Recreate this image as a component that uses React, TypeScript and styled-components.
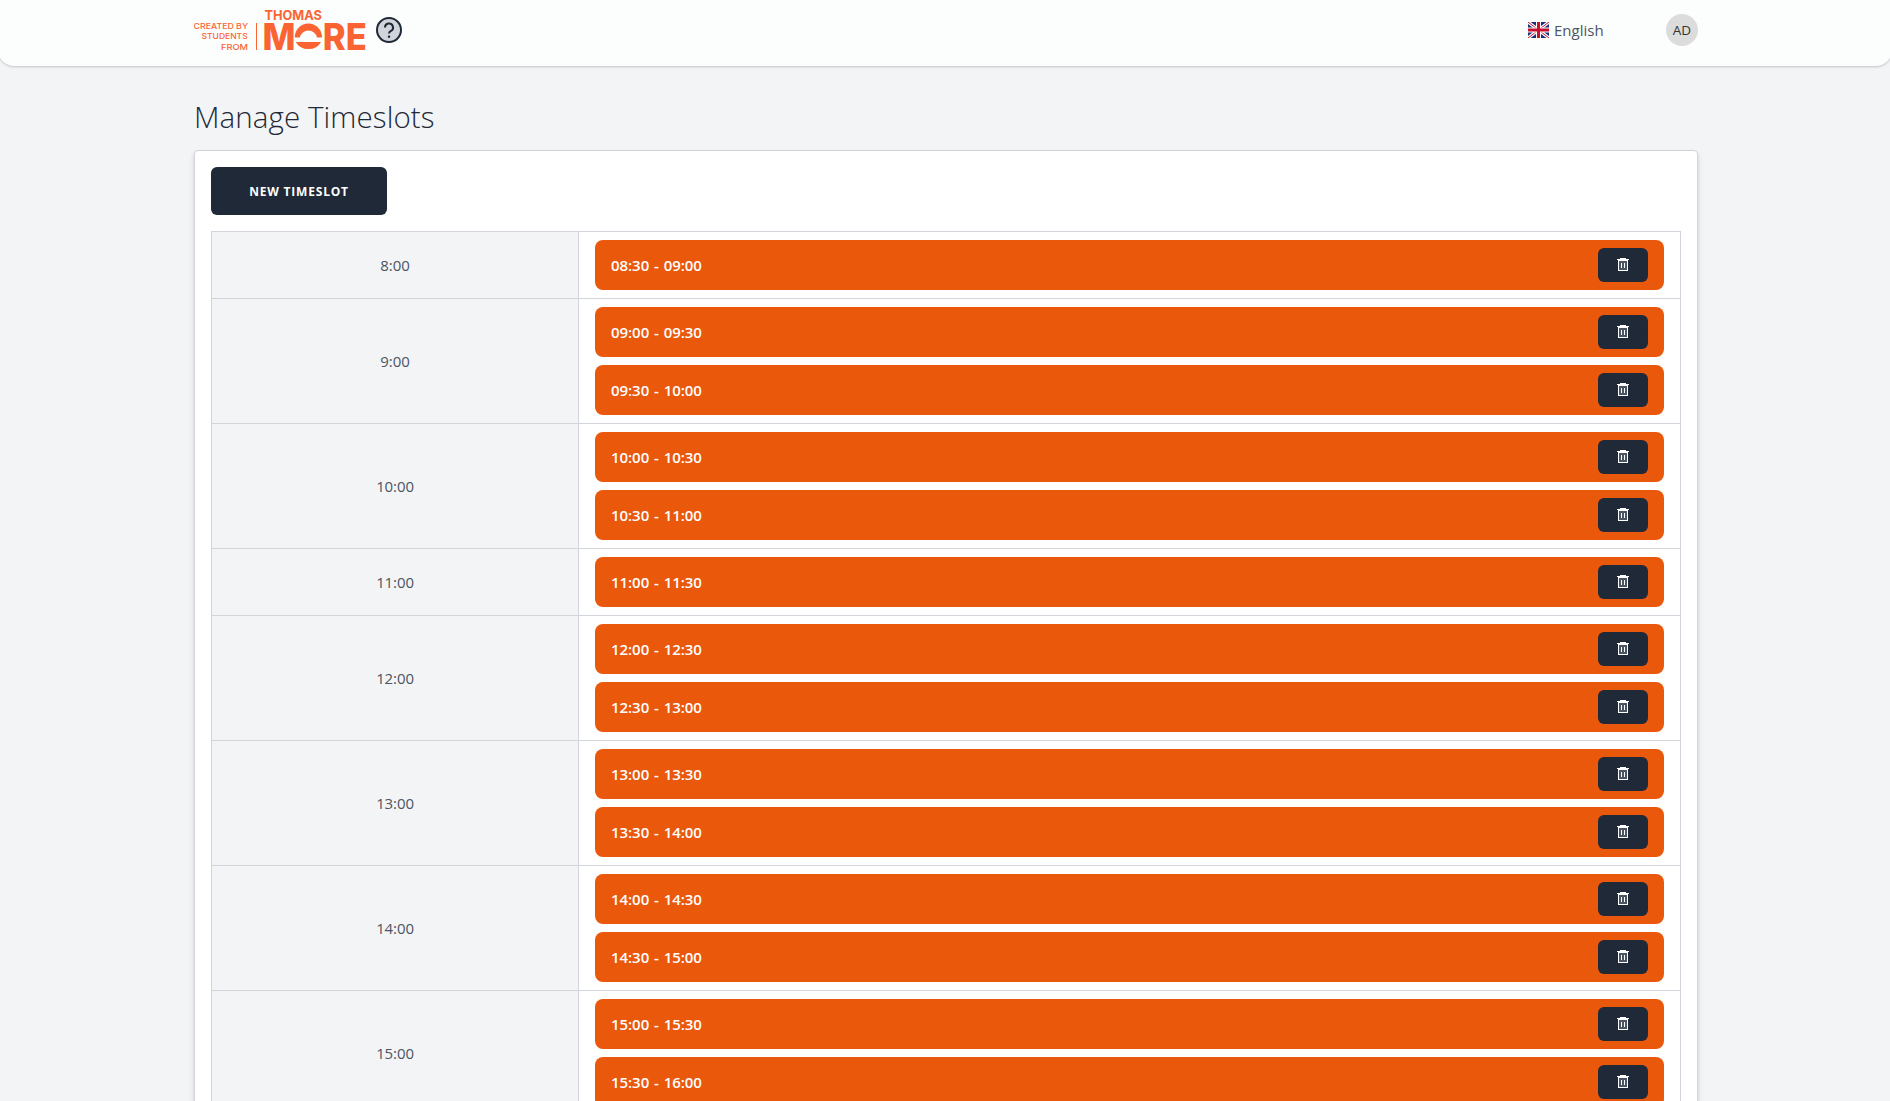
import React from 'react';
import styled, { createGlobalStyle } from 'styled-components';

const Global = createGlobalStyle`
  *, *::before, *::after { box-sizing: border-box; }
  html, body { margin: 0; height: 1101px; overflow: hidden; }
  body { background: #f3f4f6; color: #1f2937; font-family: "Open Sans", "Noto Sans", sans-serif; font-size: 15px; line-height: 24px; }
`;
const Page = styled.div`
  height: 1101px;
  overflow: hidden;
`;
const Nav = styled.header`
  display: flex;
  justify-content: space-between;
  height: 66px;
  margin: 0 -2px;
  padding: 0 194px 0 196px;
  background: #fcfefd;
  border-radius: 0 0 16px 16px;
  box-shadow: 0 1px 3px rgba(0, 0, 0, 0.1), 0 1px 2px rgba(0, 0, 0, 0.1);
`;
const Brand = styled.div`
  display: flex;
  gap: 6px;
`;
const Help = styled.svg`
  margin-top: 17px;
`;
const Tools = styled.div`
  display: flex;
  height: 60px;
  align-items: center;
`;
const Language = styled.div`
  display: flex;
  align-items: center;
  gap: 5px;
  width: 138px;
  color: #4b5563;
`;
const Avatar = styled.div`
  display: grid;
  place-items: center;
  width: 32px;
  height: 32px;
  border-radius: 50%;
  background: #dcdcdc;
  color: #333;
  font-size: 13.5px;
`;
const Main = styled.main`
  width: 1504px;
  margin-left: 194px;
  padding-top: 33px;
`;
const Title = styled.h1`
  margin: 0 0 15px;
  font-size: 29.5px;
  line-height: 36px;
  font-weight: 330;
  letter-spacing: 0.1px;
`;
const Card = styled.section`
  height: 1200px;
  padding: 16px;
  background: #fff;
  border: 1px solid #d1d5db;
  border-radius: 4px;
  box-shadow: 0 4px 6px rgba(0, 0, 0, 0.1), 0 2px 4px rgba(0, 0, 0, 0.06);
`;
const NewButton = styled.button`
  display: block;
  width: 176px;
  height: 48px;
  margin-bottom: 16px;
  padding: 0;
  border: 0;
  border-radius: 6px;
  background: #1f2937;
  color: #fff;
  font: 700 12px "Open Sans", "Noto Sans", sans-serif;
  letter-spacing: 0.8px;
`;
const Table = styled.div`
  border: 1px solid #d1d5db;
  border-bottom: 0;
`;
const Row = styled.div`
  display: grid;
  grid-template-columns: 367px 1fr;
  border-bottom: 1px solid #d1d5db;
`;
const Hour = styled.div`
  display: grid;
  place-items: center;
  background: #f3f4f6;
  border-right: 1px solid #d1d5db;
  color: #4b5563;
  letter-spacing: -0.1px;
`;
const Slots = styled.div`
  display: flex;
  flex-direction: column;
  gap: 8px;
  padding: 8px 16px;
`;
const Slot = styled.div`
  display: flex;
  align-items: center;
  justify-content: space-between;
  height: 50px;
  padding: 0 16px;
  border-radius: 8px;
  background: #ea580c;
  color: #fff;
  font-weight: 550;
  letter-spacing: -0.05px;
  word-spacing: 1px;
`;
const DeleteButton = styled.button`
  display: grid;
  place-items: center;
  width: 50px;
  height: 34px;
  padding: 0;
  border: 0;
  border-radius: 6px;
  background: #1f2937;
`;

const Trash = () => (
  <svg width="14" height="14" viewBox="0 0 14 14" fill="none" shapeRendering="crispEdges">
    <path d="M3 3h8v9H3z" fill="#4b5563" />
    <path d="M4 0h6v1H4zM1 1h12v1H1zM2 2h10v1H2zM2 3h1v9h8V3h1v10H2zM5 5h1v5H5zM8 5h1v5H8z" fill="#fff" />
  </svg>
);

const Logo = () => (
  <svg width="176" height="60" viewBox="194 0 176 60" fill="#fa6432" fontFamily="Inter, sans-serif">
    <g fontSize="8.2" fontWeight="550">
      <text x="193.5" y="29" textLength="54.5" lengthAdjust="spacingAndGlyphs">CREATED BY</text>
      <text x="201.5" y="39.3" textLength="46.2" lengthAdjust="spacingAndGlyphs">STUDENTS</text>
      <text x="221" y="49.6" textLength="27" lengthAdjust="spacingAndGlyphs">FROM</text>
    </g>
    <path d="M256 23h1v27h-1z" />
    <text x="264.4" y="20" fontSize="13.6" fontWeight="700" textLength="57.5" lengthAdjust="spacingAndGlyphs">THOMAS</text>
    <g fontSize="37" fontWeight="800">
      <text x="262.6" y="50" textLength="33" lengthAdjust="spacingAndGlyphs">M</text>
      <text x="322.8" y="50" textLength="44" lengthAdjust="spacingAndGlyphs">RE</text>
    </g>
    <path d="M294.8 37.5a13.6 14 0 0 1 27.2 0h-5a8.8 8.8 0 0 0-17.2 0zM295.8 42h25.2a13.8 12 0 0 1-25.2 0z" />
  </svg>
);

const Flag = () => (
  <svg width="21" height="16" viewBox="0 0 21 16">
    <path fill="#1b2f77" d="M0 0h21v16H0z" />
    <path d="M0 0l21 16M21 0L0 16" stroke="#fff" strokeWidth="3.2" />
    <path d="M0 0l21 16M21 0L0 16" stroke="#c8102e" strokeWidth="1" />
    <path d="M10.5 0v16M0 8h21" stroke="#fff" strokeWidth="5" />
    <path d="M10.5 0v16M0 8h21" stroke="#c8102e" strokeWidth="3" />
  </svg>
);

const schedule: { hour: string; slots: string[] }[] = [
  { hour: '8:00', slots: ['08:30 - 09:00'] },
  { hour: '9:00', slots: ['09:00 - 09:30', '09:30 - 10:00'] },
  { hour: '10:00', slots: ['10:00 - 10:30', '10:30 - 11:00'] },
  { hour: '11:00', slots: ['11:00 - 11:30'] },
  { hour: '12:00', slots: ['12:00 - 12:30', '12:30 - 13:00'] },
  { hour: '13:00', slots: ['13:00 - 13:30', '13:30 - 14:00'] },
  { hour: '14:00', slots: ['14:00 - 14:30', '14:30 - 15:00'] },
  { hour: '15:00', slots: ['15:00 - 15:30', '15:30 - 16:00'] },
];

export default function App() {
  return (
    <Page>
      <Global />
      <Nav>
        <Brand>
          <Logo />
          <Help width="26" height="26" viewBox="0 0 26 26" fill="none" stroke="#1f2937">
            <circle cx="13" cy="13" r="12" fill="#d1d5db" strokeWidth="2" />
            <path d="M9 10.5a4 4 0 1 1 6 3.4q-2 1.1-2 2.6" strokeWidth="2" />
            <circle cx="13" cy="19.8" r="1.2" fill="#1f2937" stroke="none" />
          </Help>
        </Brand>
        <Tools>
          <Language><Flag />English</Language>
          <Avatar>AD</Avatar>
        </Tools>
      </Nav>
      <Main>
        <Title>Manage Timeslots</Title>
        <Card>
          <NewButton>NEW TIMESLOT</NewButton>
          <Table>
            {schedule.map(({ hour, slots }) => (
              <Row key={hour}>
                <Hour>{hour}</Hour>
                <Slots>
                  {slots.map((slot) => (
                    <Slot key={slot}>
                      {slot}
                      <DeleteButton aria-label="Delete"><Trash /></DeleteButton>
                    </Slot>
                  ))}
                </Slots>
              </Row>
            ))}
          </Table>
        </Card>
      </Main>
    </Page>
  );
}
